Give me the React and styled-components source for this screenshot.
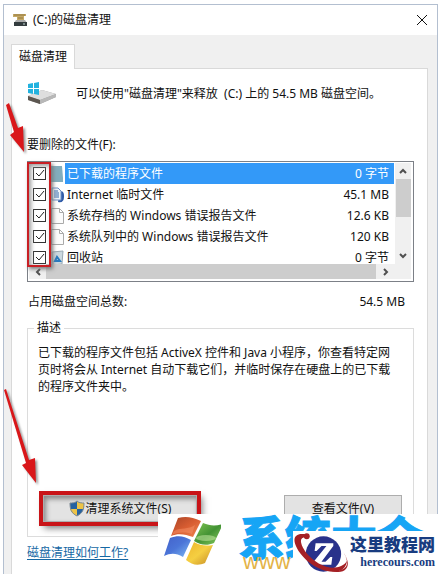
import React from "react";
import styled, { createGlobalStyle } from "styled-components";

const GlobalStyle = createGlobalStyle`
  * { box-sizing: border-box; }
  body {
    margin: 0;
    background: #fff;
    color: #111;
    font: 12px/18px "Noto Sans", "Noto Sans CJK SC", sans-serif;
  }
  button, input { font: inherit; color: inherit; margin: 0; }
`;

const Page = styled.div`
  position: relative;
  height: 100vh;
  overflow: hidden;
  padding: 4px 2px 0 3px;
`;

const Window = styled.main`
  display: flex;
  flex-direction: column;
  min-height: 100%;
  border: 1px solid #b3bfd0;
  border-bottom: 0;
  background: #f0f0f0;
`;

const TitleBar = styled.header`
  display: flex;
  align-items: center;
  gap: 5px;
  height: 30px;
  padding: 0 9px 0 8px;
  background: #fff;
`;

const Title = styled.h1`
  flex: 1;
  margin: 0;
  font-size: 12px;
  font-weight: 400;
`;

const IconButton = styled.button`
  display: grid;
  place-items: center;
  width: 12px;
  height: 16px;
  padding: 0;
  border: 0;
  background: none;
`;

const Body = styled.div`
  flex: 1;
  display: flex;
  flex-direction: column;
  align-items: stretch;
  padding: 9px 9px 0 7px;
`;

const Tab = styled.button`
  align-self: flex-start;
  z-index: 1;
  height: 25px;
  margin-bottom: -1px;
  padding: 0 7px;
  border: 1px solid #d9d9d9;
  border-bottom: 0;
  background: #fff;
`;

const Panel = styled.section`
  flex: 1;
  padding: 0 13px 0 15px;
  border: 1px solid #d9d9d9;
  border-bottom: 0;
  background: #fff;
`;

const Intro = styled.div`
  display: flex;
  align-items: center;
  gap: 18px;
  height: 50px;
  margin-bottom: 17px;
  p { margin: 0; }
`;

const Label = styled.p`
  margin: 0 0 7px;
`;

const ListBox = styled.div`
  position: relative;
  border: 1px solid #7c8087;
  padding: 1px 2px 2px 1px;
`;

const ListArea = styled.div`
  display: flex;
  height: 101px;
`;

const Rows = styled.ul`
  flex: 1;
  margin: 0;
  padding: 0;
  overflow: hidden;
  list-style: none;
`;

const Row = styled.li`
  display: flex;
  align-items: center;
  height: 21px;
  padding-left: 4px;
`;

const Check = styled.span`
  display: grid;
  margin-right: 5px;
  input, svg { grid-area: 1 / 1; }
  svg { pointer-events: none; }
`;

const CheckInput = styled.input`
  appearance: none;
  width: 13px;
  height: 13px;
  border: 1px solid #333;
  background: #fff;
`;

const RowLabel = styled.label`
  flex: 1;
  display: flex;
  justify-content: space-between;
  height: 21px;
  margin-left: 1px;
  padding: 0 5px 0 2px;
  line-height: 21px;
  background: ${(p) => (p.$selected ? "#3399f8" : "transparent")};
  color: ${(p) => (p.$selected ? "#fff" : "inherit")};
`;

const VBar = styled.div`
  display: flex;
  flex-direction: column;
  align-items: center;
  width: 16px;
  margin-left: 1px;
  background: #f0f0f0;
`;

const VThumb = styled.div`
  width: 15px;
  height: 38px;
  margin-bottom: auto;
  background: #cdcdcd;
`;

const HBar = styled.div`
  display: flex;
  align-items: center;
  height: 15px;
  padding: 0 19px 0 3px;
  background: #f0f0f0;
`;

const HThumb = styled.div`
  flex: 1;
  height: 15px;
  margin: 0 4px 0 2px;
  background: #cdcdcd;
`;

const Total = styled.div`
  display: flex;
  justify-content: space-between;
  margin: 11px 9px 8px 1px;
`;

const Group = styled.fieldset`
  display: flex;
  flex-direction: column;
  height: 218px;
  margin: 0;
  padding: 7px 11px 14px 10px;
  border: 1px solid #dcdcdc;
  legend { margin-left: -4px; padding: 0 3px; }
  p { margin: 0 4px auto 0; line-height: 17px; }
`;

const Actions = styled.div`
  display: flex;
  justify-content: space-between;
  margin-left: 5px;
`;

const Button = styled.button`
  display: flex;
  align-items: center;
  justify-content: center;
  gap: 1px;
  width: ${(p) => (p.$marked ? "154px" : "118px")};
  height: 27px;
  padding: 0;
  border: 1px solid #adadad;
  background: #e3e3e3;
  outline: ${(p) => (p.$marked ? "4px solid #c91418" : "none")};
  box-shadow: ${(p) =>
    p.$marked ? "3px 4px 7px 2px #777, inset 2px 3px 5px #888" : "none"};
`;

const HelpLink = styled.a`
  display: inline-block;
  margin-top: 7px;
  color: #1668a4;
  text-underline-offset: 2px;
`;

const CheckMarker = styled.div`
  position: absolute;
  top: 0;
  left: -1px;
  width: 24px;
  height: 105px;
  border: 2px solid #c91f24;
  box-shadow: 2px 2px 4px #777, inset 2px 2px 4px #999;
  pointer-events: none;
`;

const ArrowOverlay = styled.svg`
  position: absolute;
  left: 0;
  top: ${(p) => p.$top};
  z-index: 2;
  filter: drop-shadow(2px 2px 1px #999);
  pointer-events: none;
`;

const Banner = styled.aside`
  position: absolute;
  right: 2px;
  bottom: 0;
  z-index: 3;
  display: flex;
  width: 280px;
  height: 60px;
  padding-left: 5px;
  background: #fff;
`;

const BannerText = styled.div`
  display: flex;
  flex-direction: column;
  margin-left: 18px;
  white-space: nowrap;
  strong {
    color: #16a5f5;
    font: 900 46px/42px "Noto Sans CJK SC", sans-serif;
    -webkit-text-stroke: 1px #16a5f5;
  }
  span {
    padding-left: 4px;
    color: #e4b347;
    font: 22px/12px "Liberation Sans", sans-serif;
  }
`;

const Badge = styled.aside`
  position: absolute;
  right: 2px;
  bottom: 0;
  z-index: 4;
  display: flex;
  width: 145px;
  height: 43px;
  background: #fff;
`;

const BadgeText = styled.div`
  display: flex;
  flex-direction: column;
  align-items: flex-end;
  flex: 1;
  padding: 2px 3px 0 0;
  color: #183c80;
  white-space: nowrap;
  strong { font: 900 17px/22px "Noto Sans CJK SC", sans-serif; }
  span { font: bold 12px/14px "Liberation Serif", serif; }
`;

const files = [
  { name: "已下载的程序文件", size: "0 字节", icon: "folder", selected: true },
  { name: "Internet 临时文件", size: "45.1 MB", icon: "internet" },
  { name: "系统存档的 Windows 错误报告文件", size: "12.6 KB", icon: "page" },
  { name: "系统队列中的 Windows 错误报告文件", size: "120 KB", icon: "page" },
  { name: "回收站", size: "0 字节", icon: "bin" },
];

function CleanupIcon() {
  return (
    <svg width="16" height="16" viewBox="0 0 16 16" aria-hidden="true">
      <path d="M1 2h13v2h-2v5H5V5H1z" fill="#c5a966" />
      <path d="M2 3h11M6 6h5" stroke="#94783e" />
      <path d="M4 8h9l2 3H2z" fill="#aaa" />
      <path d="M2 10h13v4H2z" fill="#333b3e" />
      <path d="M11 12h2" stroke="#c4dad4" />
    </svg>
  );
}

function DriveIcon() {
  return (
    <svg width="31" height="26" viewBox="0 0 31 26" aria-hidden="true">
      <path d="M1 15 15 9l14 4v3L13 23 1 19z" fill="#9c9c9c" />
      <path d="M1 15 15 9l14 4-16 6z" fill="#dedede" />
      <path d="M1 15v4l12 4v-4z" fill="#5c5650" />
      <path d="m13 19 16-6v3l-16 7z" fill="#b8b8b8" />
      <path d="m1 3 5-1v5H1zm6-1 5-1v6H7zM1 8h5v5l-5-1zm6 0h5v6l-5-1z" fill="#22b2df" />
    </svg>
  );
}

function FileIcon({ kind }) {
  return (
    <svg width="13" height="16" viewBox="0 0 13 16" aria-hidden="true">
      {kind === "folder" && <path d="M0 0h11l1 12v4H0z" fill="#83aebd" />}
      {kind === "page" && (
        <path d="M.5.5h8l4 4v11H.5zM8.500 .5v4h4" fill="#fcfcfc" stroke="#aaa" />
      )}
      {kind === "internet" && (
        <>
          <path d="M9 4c4 0 4 3 4 6 0 4-2 6-6 5z" fill="#315ca8" />
          <path d="M1 1h6l3 3v9H1z" fill="#eff5fc" stroke="#6c8fc5" />
          <path d="M3 4h4M3 6h5M3 8h5M3 10h5" stroke="#376caf" />
        </>
      )}
      {kind === "bin" && (
        <>
          <path d="M1 2 12 1l-1 13-9 1z" fill="#cbd8df" stroke="#99a9b3" />
          <path d="m4 11 2-4 3 4z" fill="none" stroke="#287bc0" strokeWidth="2" />
        </>
      )}
    </svg>
  );
}

function Chevron({ d, label }) {
  return (
    <IconButton aria-label={label}>
      <svg width="10" height="10" viewBox="0 0 10 10">
        <path d={d} fill="none" stroke="#505050" strokeWidth="2" />
      </svg>
    </IconButton>
  );
}

function Shield() {
  return (
    <svg width="16" height="17" viewBox="0 0 16 17" aria-hidden="true">
      <path d="M8 1C6 3 3 3 1 3c0 6 1 10 7 13 6-3 7-7 7-13-2 0-5 0-7-2z" fill="#2662a0" />
      <path d="M8 1c2 2 5 2 7 2v6H8zM1 9h7v7C4 14 2 12 1 9z" fill="#edc346" />
      <path d="M8 1C6 3 3 3 1 3c0 6 1 10 7 13 6-3 7-7 7-13-2 0-5 0-7-2z" fill="none" stroke="#7c8994" />
    </svg>
  );
}

function FlagLogo() {
  return (
    <svg width="58" height="52" viewBox="0 0 58 52" aria-hidden="true">
      <defs>
        <linearGradient id="red" x2="1" y2="1"><stop stopColor="#a84426" /><stop offset=".5" stopColor="#d85d32" /><stop offset="1" stopColor="#ef8751" /></linearGradient>
        <linearGradient id="green" x2="1" y2="1"><stop stopColor="#83c553" /><stop offset=".5" stopColor="#439334" /><stop offset="1" stopColor="#8dcf62" /></linearGradient>
        <linearGradient id="blue" x2="1" y2="1"><stop stopColor="#4361c9" /><stop offset=".5" stopColor="#4b75d8" /><stop offset="1" stopColor="#80bcf4" /></linearGradient>
        <linearGradient id="gold" x2="1" y2="1"><stop stopColor="#edb52c" /><stop offset=".5" stopColor="#f5cf42" /><stop offset="1" stopColor="#c58a25" /></linearGradient>
      </defs>
      <path d="M15 4c8-2 14-1 23 3l-8 16c-8-3-15-4-22-1z" fill="url(#red)" />
      <path d="M40 9c7 3 13 3 20 1l-9 19c-7 3-14 2-20-2z" fill="url(#green)" />
      <path d="M7 24c8-3 14-2 21 2l-8 17c-7-4-12-4-19-1z" fill="url(#blue)" />
      <path d="M31 28c7 4 12 4 19 3l-8 18c-7 3-13 2-19-3z" fill="url(#gold)" />
      <path d="M11 17c7-4 14-1 21-6l-3 9c-7-2-13-2-20 1z" fill="#f79268" opacity=".5" />
      <ellipse cx="43" cy="24" rx="10" ry="3" fill="#d0efac" opacity=".5" />
    </svg>
  );
}

function OrbitLogo() {
  return (
    <svg width="58" height="43" viewBox="0 0 58 43" aria-hidden="true">
      <circle cx="31" cy="23" r="18" fill="#29328b" />
      <path d="M23 12h18v3L29 31h4l5-5h2l-1 8H21v-3l13-16h-5l-5 5h-2z" fill="#fff" />
      <path d="M13 3C3 1-1 6 3 15c6 14 24 27 39 26 8 0 12-4 13-11-3 5-8 7-15 7C28 36 14 26 9 14c-2-5-1-8 4-8z" fill="#a52025" />
      <path d="M49 18c6 8 9 16 5 20-3 4-9 4-16 2 11 1 17-2 17-8 0-4-2-9-6-14z" fill="#a52025" />
      <circle cx="14" cy="5" r="3" fill="#a52025" />
    </svg>
  );
}

export default function App() {
  return (
    <Page>
      <GlobalStyle />
      <Window>
        <TitleBar>
          <CleanupIcon />
          <Title>(C:)的磁盘清理</Title>
          <IconButton aria-label="关闭">
            <svg width="12" height="12" viewBox="0 0 12 12">
              <path d="m1 1 10 10M11 1 1 11" stroke="#111" />
            </svg>
          </IconButton>
        </TitleBar>
        <Body>
          <Tab>磁盘清理</Tab>
          <Panel>
            <Intro>
              <DriveIcon />
              <p>可以使用"磁盘清理"来释放 &nbsp;(C:) 上的 54.5 MB 磁盘空间。</p>
            </Intro>
            <Label>要删除的文件(F):</Label>
            <ListBox>
              <ListArea>
                <Rows>
                  {files.map((file, i) => (
                    <Row key={file.name}>
                      <Check>
                        <CheckInput type="checkbox" id={`file-${i}`} defaultChecked />
                        <svg width="13" height="13" viewBox="0 0 13 13" aria-hidden="true">
                          <path d="m3 6 3 3 5-6" fill="none" stroke="#222" />
                        </svg>
                      </Check>
                      <FileIcon kind={file.icon} />
                      <RowLabel htmlFor={`file-${i}`} $selected={file.selected}>
                        <span>{file.name}</span>
                        <span>{file.size}</span>
                      </RowLabel>
                    </Row>
                  ))}
                </Rows>
                <VBar>
                  <Chevron label="向上" d="m2 7 3-3 3 3" />
                  <VThumb />
                  <Chevron label="向下" d="m2 3 3 3 3-3" />
                </VBar>
              </ListArea>
              <HBar>
                <Chevron label="向左" d="M7 2 4 5l3 3" />
                <HThumb />
                <Chevron label="向右" d="m3 2 3 3-3 3" />
              </HBar>
              <CheckMarker />
            </ListBox>
            <Total>
              <span>占用磁盘空间总数:</span>
              <span>54.5 MB</span>
            </Total>
            <Group>
              <legend>描述</legend>
              <p>
                已下载的程序文件包括 ActiveX 控件和 Java 小程序，你查看特定网页时将会从
                Internet 自动下载它们，并临时保存在硬盘上的已下载的程序文件夹中。
              </p>
              <Actions>
                <Button $marked>
                  <Shield />
                  清理系统文件(S)
                </Button>
                <Button>查看文件(V)</Button>
              </Actions>
            </Group>
            <HelpLink href="#help">磁盘清理如何工作?</HelpLink>
          </Panel>
        </Body>
      </Window>
      <ArrowOverlay $top="100px" width="40" height="56" viewBox="0 0 40 56" aria-hidden="true">
        <path d="m6 5 3-2 9 25 5-2 1 26-14-17 4-3z" fill="#d9171a" />
      </ArrowOverlay>
      <ArrowOverlay $top="386px" width="44" height="102" viewBox="0 0 44 102" aria-hidden="true">
        <path d="m4 4 2-1 23 71 6-2 1 25-14-18 4-2z" fill="#d9171a" />
      </ArrowOverlay>
      <Banner>
        <FlagLogo />
        <BannerText>
          <strong>系统大全</strong>
          <span>www</span>
        </BannerText>
      </Banner>
      <Badge>
        <OrbitLogo />
        <BadgeText>
          <strong>这里教程网</strong>
          <span>herecours.com</span>
        </BadgeText>
      </Badge>
    </Page>
  );
}
